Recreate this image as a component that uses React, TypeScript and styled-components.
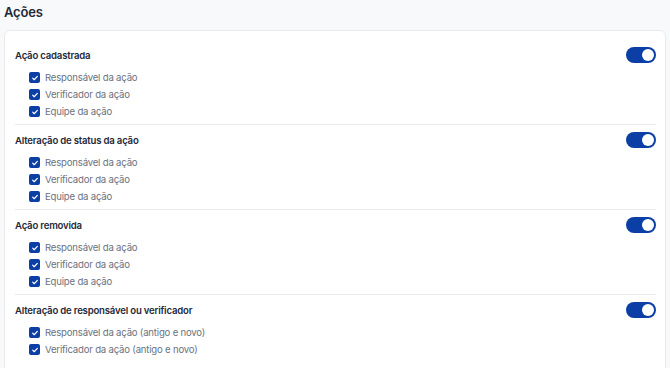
import * as React from 'react';
import styled, { createGlobalStyle } from 'styled-components';

const BLUE = '#0b3fa6';

const groups = [
  {
    title: 'Ação cadastrada',
    items: ['Responsável da ação', 'Verificador da ação', 'Equipe da ação'],
  },
  {
    title: 'Alteração de status da ação',
    items: ['Responsável da ação', 'Verificador da ação', 'Equipe da ação'],
  },
  {
    title: 'Ação removida',
    items: ['Responsável da ação', 'Verificador da ação', 'Equipe da ação'],
  },
  {
    title: 'Alteração de responsável ou verificador',
    items: ['Responsável da ação (antigo e novo)', 'Verificador da ação (antigo e novo)'],
  },
];

const CheckMark = () => (
  <svg width="8" height="8" viewBox="0 0 12 12" fill="none">
    <path d="M2.5 6.3l2.3 2.3 4.7-5" stroke="#fff" strokeWidth="1.8" strokeLinecap="round" strokeLinejoin="round" />
  </svg>
);

const App = () => {
  return (
    <Page>
      <GlobalStyle />
      <Heading>Ações</Heading>
      <Card>
        {groups.map((group, i) => (
          <Section key={i} last={i === groups.length - 1}>
            <SectionHeader>
              <SectionTitle>{group.title}</SectionTitle>
              <Toggle aria-checked="true" role="switch">
                <Knob />
              </Toggle>
            </SectionHeader>
            <List>
              {group.items.map((item) => (
                <Item key={item}>
                  <Box>
                    <CheckMark />
                  </Box>
                  <Label>{item}</Label>
                </Item>
              ))}
            </List>
          </Section>
        ))}
      </Card>
    </Page>
  );
};

const GlobalStyle = createGlobalStyle`
  html, body {
    margin: 0;
    padding: 0;
    background: #f8f9fb;
    font-family: Inter, "Noto Sans", sans-serif;
  }
`;

const Page = styled.div`
  padding: 4px 4px 0 4px;
`;

const Heading = styled.h2`
  margin: 0 0 10px;
  font-size: 13px;
  line-height: 16px;
  font-weight: 600;
  letter-spacing: -0.2px;
  color: #1f2937;
`;

const Card = styled.div`
  background: #fff;
  border: 1px solid #e8eaee;
  border-radius: 6px;
  padding: 9px 9px 14px 10px;
`;

const Section = styled.div<{ last?: boolean }>`
  padding: 7px 0 4px;
  border-bottom: ${(p) => (p.last ? 'none' : '1px solid #e8eaee')};
`;

const SectionHeader = styled.div`
  display: flex;
  align-items: center;
  justify-content: space-between;
  height: 16px;
`;

const SectionTitle = styled.span`
  font-size: 9.6px;
  font-weight: 600;
  letter-spacing: -0.2px;
  color: #1f2937;
`;

const Toggle = styled.div`
  width: 30px;
  height: 16px;
  border-radius: 8px;
  background: ${BLUE};
  display: flex;
  align-items: center;
  justify-content: flex-end;
  padding: 0 2px;
  box-sizing: border-box;
`;

const Knob = styled.div`
  width: 12px;
  height: 12px;
  border-radius: 50%;
  background: #fff;
`;

const List = styled.div`
  margin-top: 6px;
  padding-left: 14px;
  display: flex;
  flex-direction: column;
`;

const Item = styled.div`
  display: flex;
  align-items: center;
  gap: 5px;
  height: 17px;
`;

const Box = styled.span`
  width: 11px;
  height: 11px;
  border-radius: 2px;
  background: ${BLUE};
  display: flex;
  align-items: center;
  justify-content: center;
`;

const Label = styled.span`
  font-size: 9.6px;
  letter-spacing: -0.2px;
  color: #6b7280;
`;

export default App;
